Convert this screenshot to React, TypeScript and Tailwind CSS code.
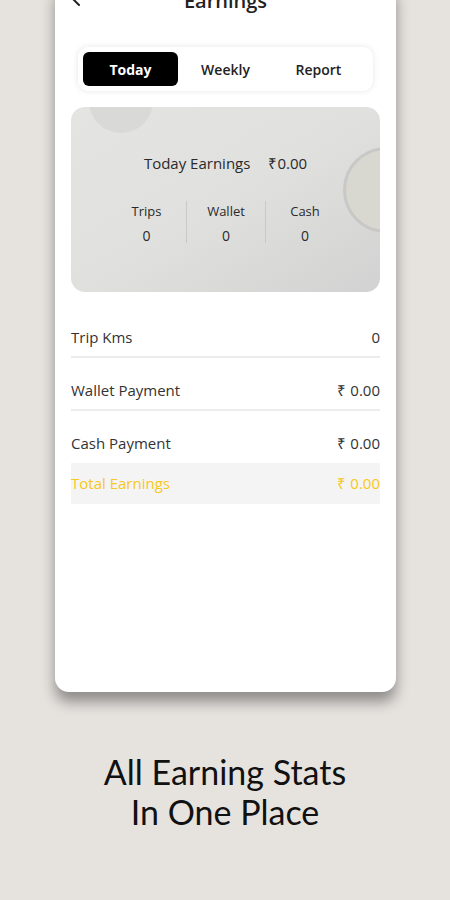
import React from 'react';

const rows = [
  { label: 'Trip Kms', value: '0' },
  { label: 'Wallet Payment', value: '₹ 0.00' },
  { label: 'Cash Payment', value: '₹ 0.00' },
];

const stats = [
  { label: 'Trips', value: '0' },
  { label: 'Wallet', value: '0' },
  { label: 'Cash', value: '0' },
];

export default function App() {
  return (
    <div className="w-[450px] h-[900px] overflow-hidden bg-[#e6e3df] flex flex-col items-center" style={{ fontFamily: '"Open Sans", sans-serif' }}>
      <div className="w-[341px] h-[706px] -mt-[14px] ml-[1px] bg-white rounded-b-[14px] shadow-[0_10px_14px_rgba(0,0,0,0.38)] flex flex-col shrink-0">
        <div className="relative h-6 mt-[3px] -mb-[3px] flex items-center justify-center">
          <svg className="absolute left-[17px] top-[5px]" width="10" height="14" viewBox="0 0 10 14" fill="none">
            <path d="M7 1 L2 6 L7 11" stroke="#222" strokeWidth="2" strokeLinecap="round" />
          </svg>
          <span className="text-[20px] font-semibold text-[#222] leading-6">Earnings</span>
        </div>

        <div className="mt-[37px] mx-[23px] h-[44px] p-[5px] bg-white rounded-[10px] shadow-[0_0_6px_rgba(0,0,0,0.10)] grid grid-cols-3">
          <div className="bg-black rounded-[6px] flex items-center justify-center text-white text-[14px] font-bold">Today</div>
          <div className="flex items-center justify-center text-[#222] text-[14px] font-semibold">Weekly</div>
          <div className="flex items-center justify-center text-[#222] text-[14px] font-semibold pr-[4px]">Report</div>
        </div>

        <div className="px-4">
          <div className="relative mt-4 h-[185px] rounded-[14px] overflow-hidden bg-gradient-to-br from-[#e4e4e2] via-[#e0e0de] to-[#d2d2d2] flex flex-col items-center">
            <div className="absolute left-[18px] -top-[40px] w-[64px] h-[66px] rounded-full bg-[#d9d9d8]" />
            <div className="absolute left-[272px] top-[40px] w-[86px] h-[86px] rounded-full bg-[#d8d7d0] border-[3px] border-[#c8c8c6]" />
            <div className="relative mt-[45px] flex items-center gap-[18px] text-[15px] text-[#2a2a2a]">
              <span>Today Earnings</span>
              <span>₹0.00</span>
            </div>
            <div className="relative mt-[26px] grid grid-cols-3 w-[237px]">
              {stats.map((s, i) => (
                <div key={s.label} className={`flex flex-col items-center h-[42px] ${i > 0 ? 'border-l border-[#c9c9c9]' : ''}`}>
                  <span className="text-[13px] font-medium leading-5 text-[#2a2a2a]">{s.label}</span>
                  <span className="mt-[5px] text-[14px] leading-5 text-[#2a2a2a]">{s.value}</span>
                </div>
              ))}
            </div>
          </div>

          <div className="mt-[13px]">
            {rows.map((r, i) => (
              <div key={r.label} className={`pt-[22px] ${i < 2 ? 'pb-[9px] border-b-2 border-[#ececec]' : 'pb-[10px]'} flex justify-between text-[15px] leading-5 text-[#333]`}>
                <span>{r.label}</span>
                <span>{r.value}</span>
              </div>
            ))}
            <div className="h-[41px] bg-[#f4f4f4] flex items-center justify-between text-[15px] text-[#f7c820]">
              <span>Total Earnings</span>
              <span>₹ 0.00</span>
            </div>
          </div>
        </div>
      </div>

      <div className="mt-[60px] text-center text-[34px] leading-[40px] text-[#111]" style={{ fontFamily: 'Lato, sans-serif' }}>
        <div>All Earning Stats</div>
        <div>In One Place</div>
      </div>
    </div>
  );
}
